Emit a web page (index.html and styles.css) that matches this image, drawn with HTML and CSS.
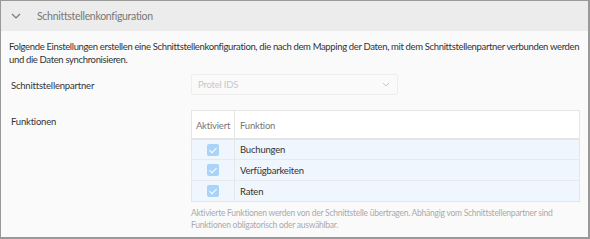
FILE: index.html
```html
<!DOCTYPE html>
<html lang="de">
<head>
    <meta charset="UTF-8">
    <title>Schnittstellenkonfiguration</title>
    <link rel="stylesheet" href="styles.css">
</head>
<body>
    <div class="panel">
        <div class="panel-header">
            <svg class="chevron" width="10" height="6" viewBox="0 0 10 6">
                <path d="M1 1 L5 5 L9 1" fill="none" stroke="#777" stroke-width="1.2"/>
            </svg>
            <span class="panel-title">Schnittstellenkonfiguration</span>
        </div>

        <div class="panel-body">
            <p class="intro">Folgende Einstellungen erstellen eine Schnittstellenkonfiguration, die nach dem Mapping der Daten, mit dem Schnittstellenpartner verbunden werden und die Daten synchronisieren.</p>

            <div class="form-row">
                <label class="form-label">Schnittstellenpartner</label>
                <div class="select disabled">
                    <span>Protel IDS</span>
                    <svg width="8" height="5" viewBox="0 0 8 5">
                        <path d="M1 1 L4 4 L7 1" fill="none" stroke="#c8c8c8" stroke-width="1"/>
                    </svg>
                </div>
            </div>

            <div class="form-row functions">
                <label class="form-label">Funktionen</label>
                <div class="field">
                    <table class="func-table">
                        <thead>
                            <tr>
                                <th class="col-check">Aktiviert</th>
                                <th>Funktion</th>
                            </tr>
                        </thead>
                        <tbody>
                            <tr>
                                <td class="col-check"><span class="checkbox"></span></td>
                                <td>Buchungen</td>
                            </tr>
                            <tr>
                                <td class="col-check"><span class="checkbox"></span></td>
                                <td>Verfügbarkeiten</td>
                            </tr>
                            <tr>
                                <td class="col-check"><span class="checkbox"></span></td>
                                <td>Raten</td>
                            </tr>
                        </tbody>
                    </table>
                    <p class="help">Aktivierte Funktionen werden von der Schnittstelle übertragen. Abhängig vom Schnittstellenpartner sind Funktionen obligatorisch oder auswählbar.</p>
                </div>
            </div>
        </div>
    </div>
</body>
</html>
```

FILE: styles.css
```css
* {
    box-sizing: border-box;
}

body {
    margin: 0;
    font-family: Lato, "Noto Sans", sans-serif;
    color: #333;
    background-color: #fafafa;
}

.panel {
    width: 590px;
    height: 239px;
    border: 1px solid #999;
    border-right-width: 2px;
    border-bottom-width: 2px;
    background-color: #fafafa;
    overflow: hidden;
}

.panel-header {
    height: 30px;
    background-color: #ececec;
    display: flex;
    align-items: center;
    padding-left: 10px;
}

.chevron {
    margin-right: 16px;
}

.panel-title {
    font-size: 10.5px;
    letter-spacing: -0.3px;
    color: #777;
}

.panel-body {
    padding: 9px 8px 0 8px;
}

.intro {
    margin: 0 -4px 0 0;
    font-size: 9.5px;
    letter-spacing: -0.35px;
    line-height: 13px;
}

.form-row {
    display: flex;
    margin-top: 8px;
}

.form-label {
    flex-shrink: 0;
    width: 182px;
    font-size: 9.5px;
    letter-spacing: -0.2px;
    padding-top: 6px;
    padding-left: 2px;
}

.select {
    width: 207px;
    height: 21px;
    border: 1px solid #eee;
    border-radius: 2px;
    background-color: #fafafa;
    display: flex;
    align-items: center;
    justify-content: space-between;
    padding: 0 7px 0 6px;
    font-size: 9.5px;
    letter-spacing: -0.2px;
    color: #c8c8c8;
}

.functions {
    margin-top: 15px;
}

.field {
    width: 389px;
}

.func-table {
    width: 100%;
    border-collapse: collapse;
    font-size: 9.5px;
    letter-spacing: -0.2px;
    border: 1px solid #e6e6e6;
}

.func-table th {
    background-color: #fff;
    color: #777;
    font-weight: normal;
    text-align: left;
    height: 28px;
    padding: 3px 5px 0 5px;
    border-bottom: 2px solid #e4e4e4;
}

.func-table th + th,
.func-table td + td {
    border-left: 1px solid #e6e6e6;
}

.func-table td {
    background-color: #eff6fd;
    height: 21px;
    padding: 0 5px;
    border-top: 1px solid #e4eaf0;
}

.col-check {
    width: 43px;
    text-align: center;
}

.func-table th.col-check {
    text-align: center;
    padding: 3px 0 0 0;
}

.checkbox {
    display: inline-block;
    width: 12px;
    height: 12px;
    border-radius: 2px;
    background-color: #a9d3f8;
    position: relative;
    vertical-align: middle;
}

.checkbox::after {
    content: "";
    position: absolute;
    left: 4px;
    top: 2px;
    width: 3px;
    height: 6px;
    border: solid #fff;
    border-width: 0 1.5px 1.5px 0;
    transform: rotate(45deg);
}

.help {
    margin: 5px 0 0 0;
    font-size: 8.5px;
    letter-spacing: -0.25px;
    line-height: 12px;
    color: #aaa;
}
```
